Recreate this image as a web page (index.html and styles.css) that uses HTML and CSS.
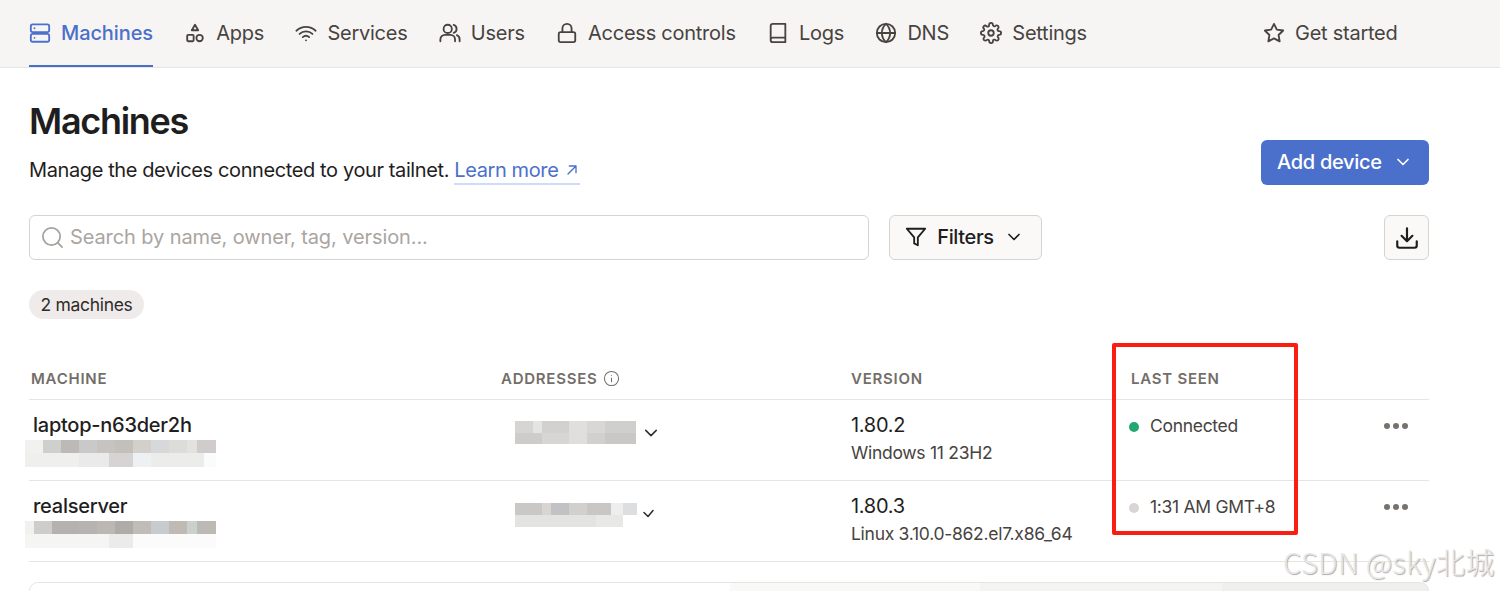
FILE: index.html
```html
<!DOCTYPE html>
<html lang="en">
<head>
<meta charset="utf-8">
<title>Machines</title>
<link rel="stylesheet" href="styles.css">
</head>
<body>
<header class="topbar">
  <nav class="nav">
    <a class="nav-item active"><svg class="icon" viewBox="0 0 24 24"><rect x="2" y="2.500" width="20" height="8.500" rx="2"/><rect x="2" y="13" width="20" height="8.500" rx="2"/><path d="M6 6.800h.01M6 17.300h.01"/></svg>Machines</a>
    <a class="nav-item"><svg class="icon" viewBox="0 0 24 24"><path d="M12 3l3.500 6h-7z"/><rect x="3.500" y="14" width="7" height="7" rx="1"/><circle cx="17" cy="17.500" r="3.500"/></svg>Apps</a>
    <a class="nav-item"><svg class="icon" viewBox="0 0 24 24"><path d="M1.500 9.500c6-5.500 15-5.500 21 0M5 13c4-3.600 10-3.600 14 0M8.500 16.500c2-1.700 5-1.700 7 0M12 20h.01"/></svg>Services</a>
    <a class="nav-item"><svg class="icon" viewBox="0 0 24 24"><circle cx="9.500" cy="7.500" r="4.500"/><path d="M1.500 21v-2a5 5 0 0 1 5-5h6a5 5 0 0 1 5 5v2M16 3.200a4.500 4.500 0 0 1 0 8.600M19.500 14.300a5 5 0 0 1 3 4.700v2"/></svg>Users</a>
    <a class="nav-item"><svg class="icon" viewBox="0 0 24 24"><rect x="3" y="11" width="18" height="11" rx="2"/><path d="M7 11V7a5 5 0 0 1 10 0v4"/></svg>Access controls</a>
    <a class="nav-item"><svg class="icon" viewBox="0 0 24 24"><path d="M4 19.500V4.500A2.500 2.500 0 0 1 6.500 2H20v20H6.500A2.500 2.500 0 0 1 4 19.500zM4 19.500A2.500 2.500 0 0 1 6.500 17H20"/></svg>Logs</a>
    <a class="nav-item"><svg class="icon" viewBox="0 0 24 24"><circle cx="12" cy="12" r="10"/><path d="M2 12h20M12 2c3 2.800 4.500 6.200 4.500 10s-1.500 7.200-4.500 10c-3-2.800-4.500-6.200-4.500-10S9 4.800 12 2z"/></svg>DNS</a>
    <a class="nav-item"><svg class="icon" viewBox="0 0 24 24"><circle cx="12" cy="12" r="3"/><path d="M19.400 15a1.650 1.650 0 0 0 .33 1.820l.06.06a2 2 0 1 1-2.830 2.830l-.06-.06a1.650 1.650 0 0 0-2.800 1.170V21a2 2 0 1 1-4 0v-.09A1.650 1.650 0 0 0 7.300 19.740l-.06.06a2 2 0 1 1-2.830-2.830l.06-.06A1.650 1.650 0 0 0 3.300 14H3a2 2 0 1 1 0-4h.09A1.650 1.650 0 0 0 4.260 7.300l-.06-.06a2 2 0 1 1 2.830-2.830l.06.06A1.650 1.650 0 0 0 10 3.300V3a2 2 0 1 1 4 0v.09a1.650 1.650 0 0 0 2.800 1.170l.06-.06a2 2 0 1 1 2.830 2.830l-.06.06A1.650 1.650 0 0 0 20.700 10H21a2 2 0 1 1 0 4h-.09a1.650 1.650 0 0 0-1.510 1z"/></svg>Settings</a>
  </nav>
  <a class="nav-item get-started"><svg class="icon" viewBox="0 0 24 24"><path d="M12 2l3.100 6.300 6.900 1-5 4.900 1.200 6.900-6.200-3.300-6.200 3.300L7 14.200l-5-4.900 6.900-1z"/></svg>Get started</a>
</header>

<main class="page">
  <section class="title-row">
    <div>
      <h1 class="title">Machines</h1>
      <p class="lead">Manage the devices connected to your tailnet. <a class="learn">Learn more <svg class="arrow" viewBox="0 0 24 24"><path d="M6 18L18 6M8 6h10v10"/></svg></a></p>
    </div>
    <button class="btn-primary">Add device<svg class="chev" viewBox="0 0 24 24"><path d="M6 9l6 6 6-6"/></svg></button>
  </section>

  <section class="tools">
    <div class="search"><svg class="search-icon" viewBox="0 0 24 24"><circle cx="11" cy="11" r="9"/><path d="M22 22l-4.600-4.600"/></svg><span>Search by name, owner, tag, version...</span></div>
    <button class="btn"><svg class="icon" viewBox="0 0 24 24"><path d="M22 3H2l8 9.500V19l4 2v-8.500z"/></svg>Filters<svg class="chev" viewBox="0 0 24 24"><path d="M6 9l6 6 6-6"/></svg></button>
    <button class="btn btn-square"><svg class="icon-lg" viewBox="0 0 24 24"><path d="M21 15v4a2 2 0 0 1-2 2H5a2 2 0 0 1-2-2v-4M7 10l5 5 5-5M12 15V3"/></svg></button>
  </section>

  <div class="pill">2 machines</div>

  <section class="table">
    <div class="row head">
      <div class="hcell">MACHINE</div>
      <div class="hcell">ADDRESSES <svg class="info" viewBox="0 0 24 24"><circle cx="12" cy="12" r="10"/><path d="M12 16.500v-5M12 7.500h.01"/></svg></div>
      <div class="hcell">VERSION</div>
      <div class="hcell">LAST SEEN</div>
      <div></div>
    </div>
    <div class="row">
      <div class="cell name-cell"><div class="name">laptop-n63der2h</div><div class="blur owner-a"></div></div>
      <div class="cell addr"><div class="blur addr-a"></div><svg class="chev-sm" viewBox="0 0 24 24"><path d="M5 8.500l7 7 7-7"/></svg></div>
      <div class="cell"><div class="ver">1.80.2</div><div class="os">Windows 11 23H2</div></div>
      <div class="cell seen"><span class="dot on"></span>Connected</div>
      <div class="cell more"><i></i><i></i><i></i></div>
    </div>
    <div class="row">
      <div class="cell name-cell"><div class="name">realserver</div><div class="blur owner-b"></div></div>
      <div class="cell addr"><div class="blur addr-b"></div><svg class="chev-tiny" viewBox="0 0 24 24"><path d="M4 9l8 8 10-12"/></svg></div>
      <div class="cell"><div class="ver">1.80.3</div><div class="os">Linux 3.10.0-862.el7.x86_64</div></div>
      <div class="cell seen"><span class="dot off"></span>1:31 AM GMT+8</div>
      <div class="cell more"><i></i><i></i><i></i></div>
    </div>
  </section>

  <div class="card"></div>
</main>

<div class="highlight"></div>
<div class="watermark">CSDN @sky北城</div>
</body>
</html>
```
FILE: styles.css
```css
* { box-sizing: border-box; }
html, body { margin: 0; height: 591px; overflow: hidden; background: #fff; }
body { font-family: Inter, "Noto Sans CJK SC", sans-serif; color: #1f1e1e; font-size: 20px; position: relative; }
a { text-decoration: none; color: inherit; }
button { font-family: inherit; }
svg { fill: none; stroke: currentColor; stroke-width: 2; stroke-linecap: round; stroke-linejoin: round; flex: none; }

.topbar { height: 68px; background: #f7f5f4; border-bottom: 1px solid #e7e5e4; display: flex; padding-left: 29px; }
.nav { display: flex; gap: 31.300px; width: 1234px; }
.nav-item { display: flex; align-items: center; gap: 10px; height: 67px; color: #47433f; font-size: 20px; letter-spacing: -.25px; border-bottom: 2px solid transparent; margin-bottom: -1px; padding-top: 1px; }
.nav-item.active { color: #4b70cc; font-weight: 500; letter-spacing: -.1px; border-bottom-color: #4b70cc; }
.icon { width: 22px; height: 22px; }
.icon-lg { width: 26px; height: 26px; }

.page { padding: 0 71px 0 29px; }
.title-row { display: flex; justify-content: space-between; align-items: flex-start; height: 147px; }
.title { margin: 31px 0 0; font-size: 36px; line-height: 44px; font-weight: 600; letter-spacing: -1.3px; }
.lead { margin: 13px 0 0; font-size: 20px; line-height: 28px; letter-spacing: -.39px; }
.learn { color: #4b70cc; border-bottom: 2px solid #cfdcf7; padding-bottom: 1px; }
.arrow { width: 16px; height: 16px; vertical-align: -1px; }
.btn-primary { margin-top: 72px; width: 168px; height: 45px; border: 0; border-radius: 6px; background: #4b70cc; color: #fff; font-size: 20px; font-weight: 500; letter-spacing: -.3px; display: flex; align-items: center; gap: 11px; padding: 0 0 2px 16px; }
.chev { width: 20px; height: 20px; }

.tools { display: flex; height: 45px; }
.search { width: 840px; border: 1px solid #d6d3d1; border-radius: 6px; display: flex; align-items: center; gap: 6px; padding: 0 0 2px 11px; color: #aaa5a1; letter-spacing: -.1px; }
.search-icon { width: 23px; height: 23px; stroke-width: 1.800; color: #a5a19d; margin-top: 2px; }
.btn { height: 45px; margin-left: 20px; width: 153px; background: #faf9f8; border: 1px solid #d6d3d1; border-radius: 6px; font-size: 20px; font-weight: 500; color: #1f1e1e; display: flex; align-items: center; justify-content: center; gap: 10px; letter-spacing: -.35px; padding: 0 2px 2px 0; }
.btn-square { width: 45px; margin-left: auto; padding: 0; }

.pill { width: 115px; height: 29px; margin-top: 30px; border-radius: 15px; background: #eeebea; font-size: 17.500px; display: flex; align-items: center; justify-content: center; color: #2f2c2a; letter-spacing: -.3px; }

.table { margin-top: 40px; }
.row { display: grid; grid-template-columns: 470px 350px 280px 250px 50px; height: 81px; border-bottom: 1px solid #e7e5e4; }
.row.head { height: 41px; align-items: center; }
.hcell { font-size: 15px; font-weight: 600; letter-spacing: .75px; color: #736e69; padding: 0 0 2px 2px; display: flex; align-items: center; gap: 5px; }
.info { width: 17px; height: 17px; stroke-width: 1.500; }
.cell { padding-top: 12px; }
.name-cell { position: relative; padding-left: 4px; }
.name { font-size: 20px; font-weight: 500; line-height: 26px; letter-spacing: -.25px; }
.ver { font-size: 20px; line-height: 26px; padding-left: 2px; letter-spacing: -.3px; }
.os { font-size: 17.500px; line-height: 26px; padding-left: 2px; margin-top: 2px; color: #47433f; letter-spacing: -.28px; }
.seen { display: flex; align-items: flex-start; font-size: 17.500px; line-height: 26px; color: #47433f; gap: 11px; padding-top: 13px; letter-spacing: -.3px; }
.dot { width: 10px; height: 10px; border-radius: 50%; margin-top: 9px; }
.dot.on { background: #22a672; }
.dot.off { background: #d9d5d5; }
.more { display: flex; gap: 3px; padding-top: 23px; margin-left: 5px; }
.more i { width: 6px; height: 6px; border-radius: 50%; background: #78726d; }

.blur { position: absolute; }
.owner-a, .owner-b { left: -4px; top: 40px; width: 191px; height: 27px; }
.owner-a { background:
  linear-gradient(90deg, #f1f1f0 0 18px, #cfcfcd 18px 36px, #bcb9b6 36px 54px, #c9c9c9 54px 72px, #c6c3c0 72px 90px, #c3bfbb 90px 108px, #d3cfcb 108px 126px, #d6d8da 126px 144px, #dcdcd9 144px 162px, #e3e2df 162px 172px, #d0cccc 172px 191px) top/100% 13px no-repeat,
  linear-gradient(90deg, #efefee 0 54px, #eaeaea 54px 84px, #d5d4d3 84px 108px, #eef1f3 108px 126px, #ececea 126px 179px, #fafbfc 179px 191px) bottom/100% 14px no-repeat; }
.owner-b { background:
  linear-gradient(90deg, #f1f1f0 0 9px, #cfcdcb 9px 27px, #b5b1af 27px 54px, #b7b3b0 54px 72px, #bcb7b2 72px 90px, #aeaca9 90px 108px, #c0bcb8 108px 126px, #c7cbce 126px 144px, #c0bab5 144px 162px, #ccd0cc 162px 172px, #bdb9b4 172px 191px) top/100% 13px no-repeat,
  linear-gradient(90deg, #f5f5f4 0 84px, #ebebea 84px 108px, #fbfbfb 108px 191px) bottom/100% 14px no-repeat; }
.addr { position: relative; }
.addr-a, .addr-b { left: 16px; }
.addr-a { top: 21px; width: 121px; height: 23px; background:
  linear-gradient(90deg, #d6d5d4 0 18px, #e4e4e3 18px 27px, #d2d1d0 27px 54px, #e0dfde 54px 72px, #d8d7d6 72px 90px, #cfcfce 90px 121px) top/100% 12px no-repeat,
  linear-gradient(90deg, #cdcccb 0 27px, #d7d6d5 27px 54px, #dfdedd 54px 72px, #d1d0cf 72px 90px, #c9c8c7 90px 121px) bottom/100% 11px no-repeat; }
.chev-sm { position: absolute; left: 143px; top: 24px; width: 18px; height: 18px; color: #2f2c2a; }
.addr-b { top: 22px; width: 122px; height: 24px; background:
  linear-gradient(90deg, #c9c8c7 0 27px, #d8d5d2 27px 36px, #c2c1c4 36px 54px, #d2d0ce 54px 72px, #c8c7c6 72px 96px, #eeeeee 96px 108px, #dddee0 108px 122px) top/100% 12px no-repeat,
  linear-gradient(90deg, #e3e3e2 0 81px, #e8e8e7 81px 108px, #ffffff 108px 122px) bottom/100% 12px no-repeat; }
.chev-tiny { position: absolute; left: 143px; top: 27px; width: 12px; height: 12px; stroke-width: 3; color: #2f2c2a; }

.card { margin-top: 20px; height: 9px; border: 1px solid #e7e5e4; border-bottom: 0; border-radius: 12px 12px 0 0; background: linear-gradient(90deg, #fff 0 700px, #f9f9f8 700px 950px, #f4f4f3 950px 1192px, #efefee 1192px 1400px); }

.highlight { position: absolute; left: 1112px; top: 343px; width: 186px; height: 192px; border: 4px solid #fa1e12; border-radius: 2px; }
.watermark { position: absolute; left: 1283px; top: 542px; font-family: "Noto Sans CJK SC", sans-serif; font-weight: 300; font-size: 29px; line-height: 38px; letter-spacing: .4px; white-space: nowrap; color: #e8e8e8; text-shadow: 1px 1px 1px #aaa; }
```
